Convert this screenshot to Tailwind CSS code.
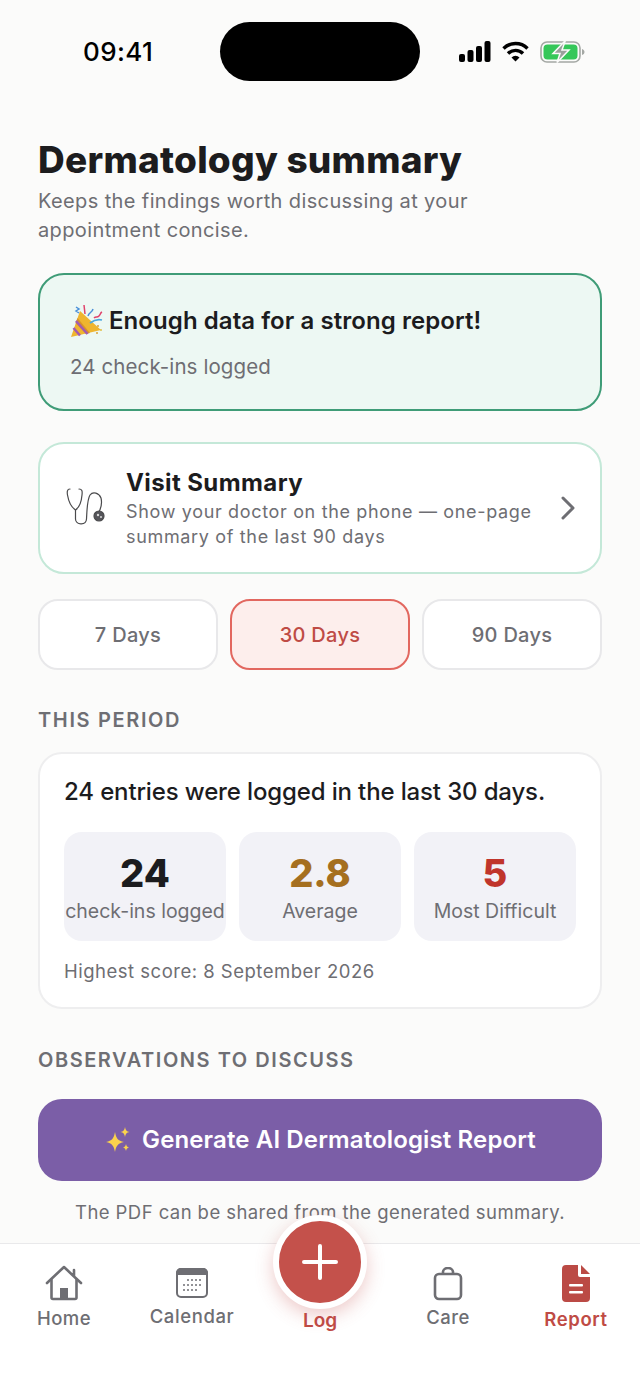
<!DOCTYPE html>
<html lang="en">
<head>
  <meta charset="UTF-8" />
  <meta name="viewport" content="width=device-width, initial-scale=1.0"/>
  <title>Dermatology summary</title>
  <script src="https://cdn.jsdelivr.net/npm/@tailwindcss/browser@4"></script>
</head>
<body class="bg-white font-['Inter',sans-serif]">
  <div class="relative w-[640px] h-[1392px] overflow-hidden flex flex-col bg-[#fbfbfa]">

    <!-- status bar -->
    <div class="relative h-[104px] shrink-0">
      <div class="absolute left-[220px] top-[22px] w-[200px] h-[59px] rounded-full bg-black"></div>
      <span class="absolute left-[83px] top-[36px] text-[26px] leading-[32px] font-medium tracking-[0.4px] text-black">09:41</span>
      <svg class="absolute left-[459px] top-[41px]" width="32" height="21" viewBox="0 0 32 21" fill="#000">
        <rect x="0" y="13" width="6" height="8" rx="2"/><rect x="8.5" y="9" width="6" height="12" rx="2"/><rect x="17" y="5" width="6" height="16" rx="2"/><rect x="25.5" y="0" width="6" height="21" rx="2"/>
      </svg>
      <svg class="absolute left-[502px] top-[41px]" width="27" height="21" viewBox="0 0 27 21" fill="none" stroke="#000" stroke-width="3.4">
        <path d="M1.500 7.500a17 17 0 0 1 24 0"/><path d="M6 12.500a10.500 10.500 0 0 1 15 0"/><path d="M13.500 20.500l-4-4a5.600 5.600 0 0 1 8 0z" fill="#000" stroke="none"/>
      </svg>
      <svg class="absolute left-[540px] top-[41px]" width="45" height="22" viewBox="0 0 45 22" fill="none">
        <rect x="1" y="1" width="39" height="20" rx="6" stroke="#a4a8a4" stroke-width="1.6"/>
        <rect x="3.500" y="3.500" width="34" height="15" rx="4" fill="#35c759"/>
        <path d="M42 8v6c1.500-.5 2.500-1.500 2.500-3s-1-2.500-2.500-3z" fill="#a4a8a4"/>
        <path d="M24.500 0.500 13 12.500h7l-3 9 12-12.500h-7l3-8.500z" fill="#9aa09c" stroke="#fbfbfa" stroke-width="1.500"/>
      </svg>
    </div>

    <!-- scrolling content -->
    <main class="flex-1 min-h-0 overflow-hidden px-[38px]">
      <h1 class="mt-[33px] text-[37px] leading-[46px] font-extrabold text-[#1c1c1e] tracking-[0.25px]">Dermatology summary</h1>
      <p class="mt-[4px] w-[480px] text-[20px] leading-[29px] tracking-[0.38px] text-[#6e6e73]">Keeps the findings worth discussing at your appointment concise.</p>

      <section class="mt-[28px] h-[138px] rounded-[26px] border-2 border-[#3f9c77] bg-[#edf8f3] px-[30px] pt-[29px]">
        <div class="flex items-center gap-[6px]">
          <svg width="33" height="34" viewBox="0 0 33 34" fill="none">
            <path d="M10 7 31 26 1 33z" fill="#efb52f"/>
            <path d="M7.500 14 20 29l-4 1L5.500 19z" fill="#d9922a"/>
            <path d="M6 17 17.500 30M3.500 24 10 31.500" stroke="#a25bb0" stroke-width="2.500"/>
            <path d="M18 12c1-4 4-3 5-7M6 3l3 2-3 2 3 2" stroke="#4a90d9" stroke-width="1.500"/>
            <path d="M14 1l1 9M24 14c2-2 3 0 5-2s1-3 3-4" stroke="#e0436b" stroke-width="1.500"/>
            <path d="M20 19c4-3 8-4 12-3" stroke="#4aa8e0" stroke-width="1.800"/>
            <circle cx="28" cy="22" r="1" fill="#d9a53a"/><circle cx="31" cy="26" r="1" fill="#e0c04a"/><circle cx="27" cy="29" r="1" fill="#d9a53a"/>
          </svg>
          <h2 class="text-[24px] leading-[34px] font-semibold tracking-[0.07px] text-[#1c1c1e]">Enough data for a strong report!</h2>
        </div>
        <p class="mt-[14px] text-[20.500px] leading-[30px] tracking-[0.1px] text-[#6e6e73]">24 check-ins logged</p>
      </section>

      <a class="mt-[31px] h-[132px] rounded-[26px] border-2 border-[#c4e8d8] bg-white pl-[26px] pr-[24px] flex items-center">
        <svg class="shrink-0" width="40" height="42" viewBox="0 0 40 42" fill="none" stroke="#4a4a4c" stroke-width="1.200" stroke-linecap="round">
          <path d="M4 2C1 2 1 5 1.500 8 2.500 14 5 20 9.500 23M13 2c3 0 3.500 2 3 6-.5 6-2 12-6.500 15"/>
          <path d="M9.500 23v9c0 6 10.500 7 11 0 .5-8 .5-19 3.500-24 3-4 9-2 11 3 1.500 6 0 10-2 14"/>
          <circle cx="33" cy="29" r="5" fill="#55555a"/><circle cx="32" cy="28" r="1.200" fill="#d8d8d8" stroke="none"/><circle cx="35" cy="30" r="1" fill="#d8d8d8" stroke="none"/>
        </svg>
        <div class="ml-[20px] flex-1 min-w-0">
          <h3 class="text-[24px] leading-[30px] font-bold tracking-[0.4px] text-[#1c1c1e]">Visit Summary</h3>
          <p class="mt-[1px] text-[18px] leading-[25px] tracking-[0.66px] text-[#6e6e73]">Show your doctor on the phone — one-page summary of the last 90 days</p>
        </div>
        <svg class="shrink-0 ml-[14px]" width="16" height="24" viewBox="0 0 16 24" fill="none" stroke="#6e6e73" stroke-width="3" stroke-linecap="round" stroke-linejoin="round"><path d="M3 2l10 10-10 10"/></svg>
      </a>

      <div class="mt-[25px] grid grid-cols-3 gap-[12px] h-[71px]">
        <button class="rounded-[20px] border-[2.500px] border-[#e8e8ea] bg-white text-[20px] font-medium tracking-[0.3px] text-[#6e6e73]">7 Days</button>
        <button class="rounded-[20px] border-[2.500px] border-[#e2675f] bg-[#fdeeec] text-[20px] font-medium tracking-[0.3px] text-[#bf4b45]">30 Days</button>
        <button class="rounded-[20px] border-[2.500px] border-[#e8e8ea] bg-white text-[20px] font-medium tracking-[0.3px] text-[#6e6e73]">90 Days</button>
      </div>

      <h2 class="mt-[36px] text-[20px] leading-[28px] font-semibold tracking-[1.64px] text-[#6e6e73]">THIS PERIOD</h2>

      <section class="mt-[18px] h-[257px] rounded-[24px] border-2 border-[#eeeeef] bg-white px-[24px] pt-[21px]">
        <p class="text-[24px] leading-[34px] font-medium tracking-[-0.14px] text-[#1c1c1e]">24 entries were logged in the last 30 days.</p>
        <div class="mt-[23px] grid grid-cols-3 gap-[13px]">
          <div class="h-[109px] rounded-[18px] bg-[#f2f2f7] flex flex-col items-center pt-[20px]">
            <span class="text-[38px] leading-[42px] font-extrabold text-[#1c1c1e]">24</span>
            <span class="mt-[4px] text-[19.500px] leading-[26px] whitespace-nowrap text-[#6e6e73]">check-ins logged</span>
          </div>
          <div class="h-[109px] rounded-[18px] bg-[#f2f2f7] flex flex-col items-center pt-[20px]">
            <span class="text-[38px] leading-[42px] font-extrabold text-[#a56f1f]">2.8</span>
            <span class="mt-[4px] text-[19.500px] leading-[26px] text-[#6e6e73]">Average</span>
          </div>
          <div class="h-[109px] rounded-[18px] bg-[#f2f2f7] flex flex-col items-center pt-[20px]">
            <span class="text-[38px] leading-[42px] font-extrabold text-[#c0352b]">5</span>
            <span class="mt-[4px] text-[19.500px] leading-[26px] text-[#6e6e73]">Most Difficult</span>
          </div>
        </div>
        <p class="mt-[17px] text-[18.500px] leading-[26px] tracking-[0.5px] text-[#6e6e73]">Highest score: 8 September 2026</p>
      </section>

      <h2 class="mt-[37px] text-[20px] leading-[28px] font-semibold tracking-[1.55px] text-[#6e6e73]">OBSERVATIONS TO DISCUSS</h2>

      <button class="mt-[25px] w-full h-[82px] rounded-[24px] bg-[#7b5ea7] flex items-center justify-center gap-[10px] text-[24px] font-semibold tracking-[0.13px] text-white">
        <svg width="28" height="28" viewBox="0 0 28 28" fill="#fbd34d">
          <path d="M11 6c1 6 3 9 9 10-6 1-8 4-9 10-1-6-3-9-9-10 6-1 8-4 9-10z"/>
          <path d="M21 1c.5 3 1.500 4.500 4.500 5-3 .5-4 2-4.500 5-.5-3-1.500-4.500-4.500-5 3-.5 4-2 4.500-5z"/>
          <path d="M22 18c.4 2 1 3 3 3.500-2 .4-2.600 1.500-3 3.500-.4-2-1-3.100-3-3.500 2-.5 2.600-1.500 3-3.500z"/>
        </svg>
        <span>Generate AI Dermatologist Report</span>
      </button>

      <p class="mt-[18px] text-center text-[18.500px] leading-[26px] tracking-[0.43px] whitespace-nowrap text-[#6e6e73]">The PDF can be shared from the generated summary.</p>
    </main>

    <!-- tab bar -->
    <nav class="relative h-[149px] shrink-0 border-t border-[#e9e9eb] bg-white">
      <div class="grid grid-cols-5 h-full">
        <a class="flex flex-col items-center pt-[21px] text-[#6e6e73]">
          <svg width="38" height="36" viewBox="0 0 38 36" fill="none" stroke="#6e6e73" stroke-width="2.600" stroke-linejoin="round" stroke-linecap="round">
            <path d="M2 18 19 2l10 9.500V5M29 11.500 36 18"/><path d="M6.500 15v17.500a1.500 1.500 0 0 0 1.500 1.500h22a1.500 1.500 0 0 0 1.500-1.500V15"/>
            <rect x="15" y="23" width="8" height="11" fill="#6e6e73" stroke="none"/>
          </svg>
          <span class="mt-[5px] text-[18.500px] leading-[24px] font-medium tracking-[0.4px]">Home</span>
        </a>
        <a class="flex flex-col items-center pt-[24px] text-[#6e6e73]">
          <svg width="32" height="30" viewBox="0 0 32 30">
            <rect x="1" y="1" width="30" height="28" rx="4" fill="#fff" stroke="#6e6e73" stroke-width="2"/>
            <path d="M5 0h22a5 5 0 0 1 5 5v2H0V5a5 5 0 0 1 5-5z" fill="#6e6e73"/>
            <g fill="#6e6e73"><circle cx="12" cy="12" r="1"/><circle cx="16" cy="12" r="1"/><circle cx="20" cy="12" r="1"/><circle cx="24" cy="12" r="1"/><circle cx="8" cy="17" r="1"/><circle cx="12" cy="17" r="1"/><circle cx="16" cy="17" r="1"/><circle cx="20" cy="17" r="1"/><circle cx="24" cy="17" r="1"/><circle cx="8" cy="22" r="1"/><circle cx="12" cy="22" r="1"/><circle cx="16" cy="22" r="1"/><circle cx="20" cy="22" r="1"/></g>
          </svg>
          <span class="mt-[6px] text-[18.500px] leading-[24px] font-medium tracking-[0.6px]">Calendar</span>
        </a>
        <div class="flex flex-col items-center justify-start pt-[65px]">
          <span class="text-[19px] leading-[24px] font-semibold text-[#bf4b45]">Log</span>
        </div>
        <a class="flex flex-col items-center pt-[23px] text-[#6e6e73]">
          <svg width="30" height="34" viewBox="0 0 30 34" fill="none" stroke="#6e6e73" stroke-width="2.600" stroke-linejoin="round">
            <rect x="2" y="7" width="26" height="25" rx="4"/><path d="M10 7V5a5 4 0 0 1 10 0v2"/>
          </svg>
          <span class="mt-[4px] text-[18.500px] leading-[24px] font-medium tracking-[0.4px]">Care</span>
        </a>
        <a class="flex flex-col items-center pt-[21px] text-[#bf4b45]">
          <svg width="28" height="37" viewBox="0 0 28 37">
            <path d="M4 0h12v10a2 2 0 0 0 2 2h10v21a4 4 0 0 1-4 4H4a4 4 0 0 1-4-4V4a4 4 0 0 1 4-4z" fill="#bb4a45"/>
            <path d="M19 0l9 9h-9z" fill="#bb4a45"/>
            <rect x="7" y="19" width="14" height="2.500" rx="1" fill="#fff"/><rect x="7" y="26" width="14" height="2.500" rx="1" fill="#fff"/>
          </svg>
          <span class="mt-[5px] text-[18.500px] leading-[24px] font-semibold tracking-[0.6px]">Report</span>
        </a>
      </div>
      <button class="absolute left-[273px] top-[-29px] w-[94px] h-[94px] rounded-full border-[6px] border-white bg-[#c4514b] shadow-[0_6px_18px_rgba(196,81,75,0.3)] flex items-center justify-center">
        <svg width="36" height="36" viewBox="0 0 36 36" stroke="#fff" stroke-width="4" stroke-linecap="round"><path d="M18 2v32M2 18h32"/></svg>
      </button>
    </nav>
  </div>
</body>
</html>
